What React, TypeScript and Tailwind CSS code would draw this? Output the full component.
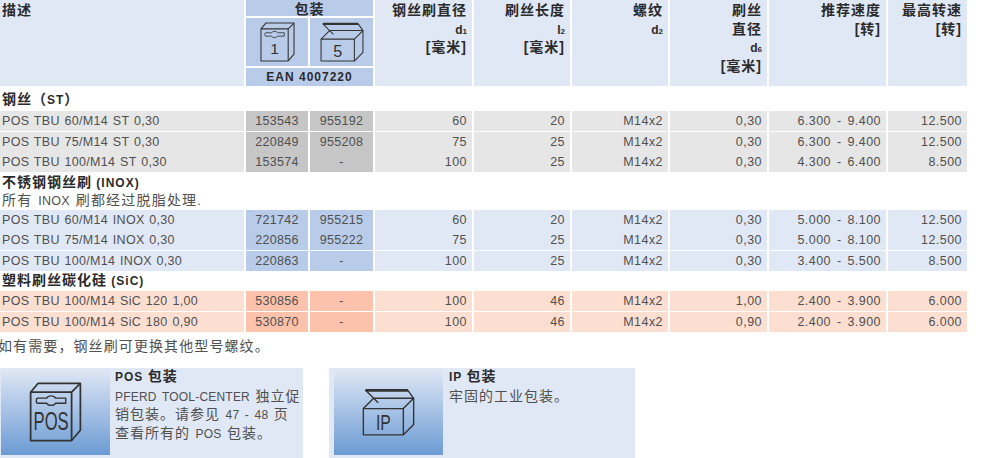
import React from "react";

const gridCols = "grid grid-cols-[244px_62px_63px_97px_96px_96px_97px_117px_79px] gap-x-[2px] w-[967px]";
const cjk = "font-['Liberation_Sans','Noto_Sans_CJK_SC',sans-serif]";

type Row = string[];

const steelRows: Row[] = [
  ["POS TBU 60/M14 ST 0,30", "153543", "955192", "60", "20", "M14x2", "0,30", "6.300 - 9.400", "12.500"],
  ["POS TBU 75/M14 ST 0,30", "220849", "955208", "75", "25", "M14x2", "0,30", "6.300 - 9.400", "12.500"],
  ["POS TBU 100/M14 ST 0,30", "153574", "-", "100", "25", "M14x2", "0,30", "4.300 - 6.400", "8.500"],
];

const inoxRows: Row[] = [
  ["POS TBU 60/M14 INOX 0,30", "721742", "955215", "60", "20", "M14x2", "0,30", "5.000 - 8.100", "12.500"],
  ["POS TBU 75/M14 INOX 0,30", "220856", "955222", "75", "25", "M14x2", "0,30", "5.000 - 8.100", "12.500"],
  ["POS TBU 100/M14 INOX 0,30", "220863", "-", "100", "25", "M14x2", "0,30", "3.400 - 5.500", "8.500"],
];

const sicRows: Row[] = [
  ["POS TBU 100/M14 SiC 120 1,00", "530856", "-", "100", "46", "M14x2", "1,00", "2.400 - 3.900", "6.000"],
  ["POS TBU 100/M14 SiC 180 0,90", "530870", "-", "100", "46", "M14x2", "0,90", "2.400 - 3.900", "6.000"],
];

// chinese runs are set bigger and wider than the latin in this catalogue
function Mixed({ text, cn }: { text: string; cn: string }) {
  const parts = text.split(/([\u3000-\u9fff\uff00-\uffef]+)/);
  return (
    <>
      {parts.map((part, i) =>
        i % 2 === 1 ? (
          <span key={i} className={cn}>
            {part}
          </span>
        ) : (
          <span key={i}>{part}</span>
        )
      )}
    </>
  );
}

function BagIcon({ label, fontSize, textLength, width, height, stroke }: { label: string; fontSize: number; textLength?: number; width: number; height: number; stroke: number }) {
  return (
    <svg width={width} height={height} viewBox="0 0 36 41" fill="none" stroke="#333" strokeWidth={stroke} strokeLinejoin="round">
      <path d="M1 7 L6 1 H35 V33 L29 40 H1 Z" />
      <path d="M1 7 H29 V40 M29 7 L35 1" />
      <path d="M6 11 H12 C13 9 17 9 18 11 H25 V14.5 H18 C17 16.5 13 16.5 12 14.5 H6 C4.5 14.5 4.5 11 6 11 Z" strokeWidth={stroke * 0.8} />
      <text x="15" y="33" textAnchor="middle" fontSize={fontSize} textLength={textLength} lengthAdjust="spacingAndGlyphs" fill="#333" stroke="none" fontFamily="'Liberation Sans',sans-serif">
        {label}
      </text>
    </svg>
  );
}

function BoxIcon({ label, fontSize, textLength, width, height, stroke }: { label: string; fontSize: number; textLength?: number; width: number; height: number; stroke: number }) {
  return (
    <svg width={width} height={height} viewBox="0 0 46 42" fill="none" stroke="#333" strokeWidth={stroke} strokeLinejoin="round">
      <path d="M1 18 V41 H36 V18 Z" />
      <path d="M1 18 L10 9 H45 L36 18" />
      <path d="M45 9 V32 L36 41" />
      <path d="M10 9 L14 13 M10 9 L3 2 H40 L45 9" />
      <path d="M3 2 H40" strokeWidth={stroke * 2} />
      <text x="18.5" y="37" textAnchor="middle" fontSize={fontSize} textLength={textLength} lengthAdjust="spacingAndGlyphs" fill="#333" stroke="none" fontFamily="'Liberation Sans',sans-serif">
        {label}
      </text>
    </svg>
  );
}

function HeaderCell({ lines }: { lines: React.ReactNode[] }) {
  return (
    <div className="bg-[#e1e8f5] h-[86px] pr-[5px] pt-[1px] text-right font-bold text-[14px] tracking-[1px] leading-[18.5px] text-[#2b2b2b]">
      {lines.map((line, i) => (
        <div key={i} className="h-[18.5px]">
          {line}
        </div>
      ))}
    </div>
  );
}

function Sym({ base, sub }: { base: string; sub: string }) {
  return (
    <span className="text-[12px] tracking-normal">
      {base}
      <span className="text-[8px]">{sub}</span>
    </span>
  );
}

function TableHeader() {
  return (
    <div className={gridCols}>
      <div className="bg-[#e1e8f5] h-[86px] pl-[2px] pt-[1px] font-bold text-[14px] tracking-[1px] leading-[18.5px] text-[#2b2b2b]">描述</div>
      <div className="col-span-2 flex flex-col h-[86px] text-[#2b2b2b]">
        <div className="bg-[#b8cce9] h-[16px] text-center font-bold text-[14px] tracking-[1px] leading-[18px]">包装</div>
        <div className="flex gap-x-[2px] mt-[2px]">
          <div className="bg-[#b8cce9] w-[62px] h-[48px] flex items-center justify-center">
            <BagIcon label="1" fontSize={16} width={35} height={40} stroke={1.1} />
          </div>
          <div className="bg-[#b8cce9] w-[63px] h-[48px] flex items-center justify-center">
            <BoxIcon label="5" fontSize={17} width={44} height={40} stroke={1.1} />
          </div>
        </div>
        <div className="bg-[#b8cce9] h-[18px] mt-[2px] text-center font-bold text-[12px] tracking-[1px] leading-[18px]">EAN 4007220</div>
      </div>
      <HeaderCell lines={["钢丝刷直径", <Sym base="d" sub="1" />, "[毫米]"]} />
      <HeaderCell lines={["刷丝长度", <Sym base="l" sub="2" />, "[毫米]"]} />
      <HeaderCell lines={["螺纹", <Sym base="d" sub="2" />]} />
      <HeaderCell lines={["刷丝", "直径", <Sym base="d" sub="6" />, "[毫米]"]} />
      <HeaderCell lines={["推荐速度", "[转]"]} />
      <HeaderCell lines={["最高转速", "[转]"]} />
    </div>
  );
}

function DataRows({ rows, rowBg, cellBg, gaps }: { rows: Row[]; rowBg: string; cellBg: string; gaps: string[] }) {
  return (
    <>
      {rows.map((row, i) => (
        <div key={row[0]} className={`${gridCols} h-[18.5px] ${gaps[i]} text-[12.5px] tracking-[0.3px] leading-[20px] text-[#505050]`}>
          <div className={`${rowBg} pl-[2px] whitespace-nowrap [word-spacing:1px]`}>{row[0]}</div>
          <div className={`${cellBg} text-center`}>{row[1]}</div>
          <div className={`${cellBg} text-center`}>{row[2]}</div>
          {row.slice(3).map((value, j) => (
            <div key={j} className={`${rowBg} text-right pr-[5px] tracking-[0.45px] [word-spacing:2px]`}>
              {value}
            </div>
          ))}
        </div>
      ))}
    </>
  );
}

function SectionTitle({ text, className }: { text: string; className: string }) {
  return (
    <div className={`font-bold text-[12px] tracking-[1px] leading-[18.5px] text-[#2b2b2b] whitespace-nowrap ${className}`}>
      <Mixed text={text} cn="text-[14px]" />
    </div>
  );
}

function InfoPanel({ icon, title, lines, className, textClass }: { icon: React.ReactNode; title: string; lines: string[]; className: string; textClass: string }) {
  return (
    <div className={`bg-[#e1e8f5] h-[90px] flex ${className}`}>
      <div className="w-[109px] h-[87px] bg-gradient-to-b from-[#e1e8f5] to-[#6b9bd3] flex items-center justify-center">{icon}</div>
      <div className={`${textClass} -mt-[1px] text-[12px] tracking-[0.2px] [word-spacing:2px] leading-[18.5px] text-[#505050] whitespace-nowrap`}>
        <SectionTitle text={title} className="tracking-[0.6px] [word-spacing:0px]" />
        {lines.map((line) => (
          <div key={line} className="h-[18.5px]">
            <Mixed text={line} cn="text-[14px] tracking-[1px]" />
          </div>
        ))}
      </div>
    </div>
  );
}

export default function App() {
  return (
    <div className={`w-[983px] h-[458px] bg-white overflow-hidden ${cjk}`}>
      <TableHeader />
      <SectionTitle text="钢丝（ST）" className="h-[25px] pl-[2px] pt-[4px]" />
      <DataRows rows={steelRows} rowBg="bg-[#e6e6e6]" cellBg="bg-[#c6c6c6]" gaps={["mb-[2px]", "mb-[2px]", ""]} />
      <div className="h-[39px] pl-[2px] pt-[2px] text-[12.5px] tracking-[0.3px] leading-[18.5px] text-[#505050]">
        <SectionTitle text="不锈钢钢丝刷 (INOX)" className="h-[18px] tracking-[1.4px]" />
        <div className="h-[18.5px] [word-spacing:2px]">
          <Mixed text="所有 INOX 刷都经过脱脂处理." cn="text-[14px] tracking-[1.2px]" />
        </div>
      </div>
      <DataRows rows={inoxRows} rowBg="bg-[#e1e8f5]" cellBg="bg-[#b8cce9]" gaps={["mb-[2px]", "mb-[2px]", ""]} />
      <SectionTitle text="塑料刷丝碳化硅 (SiC)" className="h-[22px] pl-[2px] pt-[2px]" />
      <DataRows rows={sicRows} rowBg="bg-[#fddfd2]" cellBg="bg-[#fdc2ac]" gaps={["mb-[2px]", ""]} />
      <div className="h-[38px] pt-[7px] -ml-[2px] text-[14px] tracking-[1.1px] leading-[18.5px] text-[#505050] whitespace-nowrap">如有需要，钢丝刷可更换其他型号螺纹。</div>
      <div className="flex gap-x-[26px]">
        <InfoPanel
          className="w-[303px] pl-[1px]"
          textClass="ml-[5px]"
          icon={<BagIcon label="POS" fontSize={17} textLength={24} width={53} height={60} stroke={1.2} />}
          title="POS 包装"
          lines={["PFERD TOOL-CENTER 独立促", "销包装。请参见 47 - 48 页", "查看所有的 POS 包装。"]}
        />
        <InfoPanel
          className="w-[306px] pl-[5px]"
          textClass="ml-[6px]"
          icon={<BoxIcon label="IP" fontSize={19} textLength={13} width={53} height={48} stroke={1.2} />}
          title="IP 包装"
          lines={["牢固的工业包装。"]}
        />
      </div>
    </div>
  );
}
